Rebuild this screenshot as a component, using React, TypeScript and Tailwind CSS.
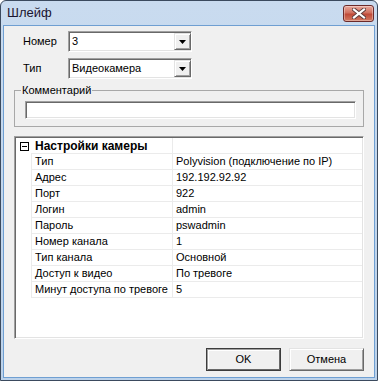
const sunken =
  'border border-t-[#a0a0a0] border-l-[#a0a0a0] border-b-white border-r-white shadow-[inset_1px_1px_0_#696969,inset_-1px_-1px_0_#e3e3e3]'
const raised =
  'border border-t-[#e3e3e3] border-l-[#e3e3e3] border-b-[#696969] border-r-[#696969] shadow-[inset_1px_1px_0_#fff,inset_-1px_-1px_0_#a0a0a0]'

const rows: [string, string][] = [
  ['Тип', 'Polyvision (подключение по IP)'],
  ['Адрес', '192.192.92.92'],
  ['Порт', '922'],
  ['Логин', 'admin'],
  ['Пароль', 'pswadmin'],
  ['Номер канала', '1'],
  ['Тип канала', 'Основной'],
  ['Доступ к видео', 'По тревоге'],
  ['Минут доступа по тревоге', '5'],
]

const Combo = ({ value }: { value: string }) => (
  <div className={`flex h-[21px] w-[124px] items-center bg-white p-[1px] pr-0 ${sunken}`}>
    <span className="flex-1 pl-[2px] leading-none">{value}</span>
    <span className={`flex h-[17px] w-[17px] items-center justify-center bg-[#f0f0f0] ${raised}`}>
      <svg width="7" height="4" viewBox="0 0 7 4">
        <path d="M0 0h7L3.5 4z" fill="#000" />
      </svg>
    </span>
  </div>
)

const App = () => {
  return (
    <div className="h-[381px] w-[378px] bg-white font-['Liberation_Sans',Arial,sans-serif] text-[11px] text-black">
      <div className="flex h-full w-full flex-col rounded-t-[6px] border border-[#3b4a5e] bg-[linear-gradient(#c9dbef,#bcd2ea)]">
        <div className="flex h-[24px] items-start pl-[6px] pr-[3px]">
          <span className="mt-[4px] text-[13px] leading-[16px] text-[#1b1530]">Шлейф</span>
          <span className="ml-auto mt-[4px] flex h-[17px] w-[31px] items-center justify-center rounded-[3px] border border-[#6b2a2a] bg-[linear-gradient(#e9a99c,#d0705f_45%,#c04a38_55%,#d27a62)] shadow-[inset_0_0_0_1px_rgba(255,255,255,0.35)]">
            <svg width="14" height="11" viewBox="0 0 14 11">
              <path
                d="M2 1.5 12 9.5M12 1.5 2 9.5"
                stroke="#5a3a3a"
                strokeWidth="4"
                strokeLinecap="square"
              />
              <path d="M2 1.5 12 9.5M12 1.5 2 9.5" stroke="#fff" strokeWidth="2.2" strokeLinecap="square" />
            </svg>
          </span>
        </div>
        <div className="mx-[2px] mb-[2px] flex flex-1 flex-col border border-[#6f9fd2] bg-[#f0f0f0] px-[10px] pt-[5px]">
          <div className="flex h-[21px] items-center">
            <span className="ml-[9px] w-[45px]">Номер</span>
            <Combo value="3" />
          </div>
          <div className="mt-[6px] flex h-[21px] items-center">
            <span className="ml-[9px] w-[45px]">Тип</span>
            <Combo value="Видеокамера" />
          </div>
          <fieldset className="mt-[5px] border border-[#a8a8a8] pb-[7px]">
            <legend className="ml-[6px] px-[1px] leading-[13px]">Комментарий</legend>
            <div className={`ml-[10px] mr-[7px] mt-[4px] h-[18px] bg-white ${sunken}`} />
          </fieldset>
          <div className={`mt-[9px] h-[203px] bg-white p-[1px] ${sunken}`}>
            <div className="flex h-[16px]">
              <div className="flex w-[15px] items-center pl-[4px]">
                <svg width="9" height="9" viewBox="0 0 9 9">
                  <rect x="0.5" y="0.5" width="8" height="8" fill="#fff" stroke="#000" />
                  <path d="M2 4.5h5" stroke="#000" />
                </svg>
              </div>
              <div className="flex w-[142px] items-center border-b border-r border-[#ebebeb] pl-[4px] text-[12px] font-bold">
                Настройки камеры
              </div>
              <div className="flex-1 border-b border-[#ebebeb]" />
            </div>
            {rows.map(([name, value]) => (
              <div key={name} className="flex h-[16px] pl-[15px]">
                <div className="flex w-[142px] items-center border-b border-l border-r border-[#ebebeb] pl-[3px]">
                  {name}
                </div>
                <div className="flex flex-1 items-center border-b border-[#ebebeb] pl-[3px]">{value}</div>
              </div>
            ))}
          </div>
          <div className="mt-[9px] flex justify-end gap-[8px]">
            <button className="h-[23px] w-[75px] border border-[#3c3c3c] bg-[#f0f0f0] shadow-[inset_1px_1px_0_#a0a0a0,inset_-1px_-1px_0_#696969,inset_2px_2px_0_#fff]">
              OK
            </button>
            <button className={`h-[23px] w-[75px] bg-[#f0f0f0] ${raised}`}>Отмена</button>
          </div>
        </div>
      </div>
    </div>
  )
}
export default App
